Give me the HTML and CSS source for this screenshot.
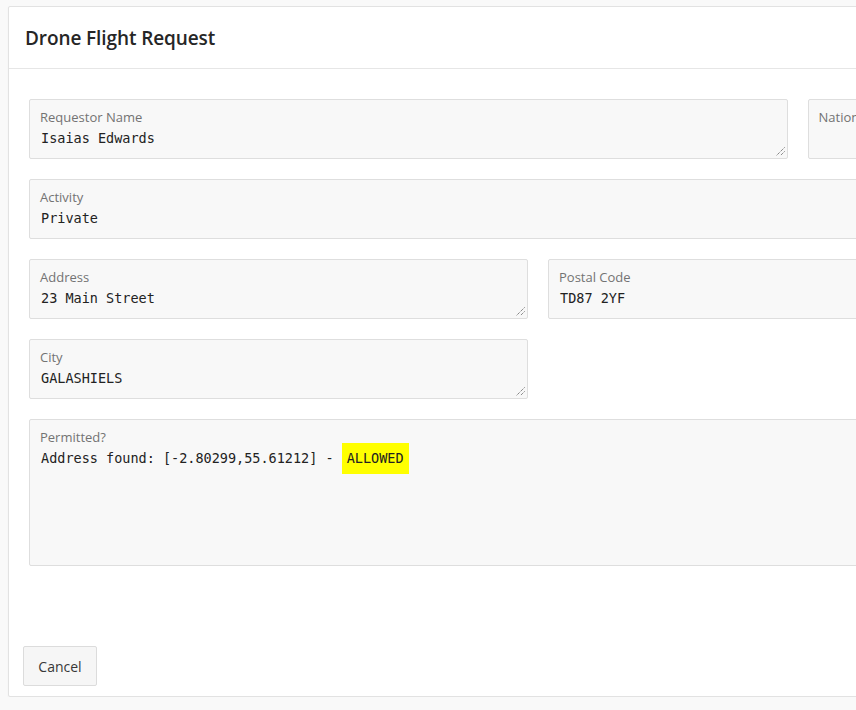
FILE: index.html
```html
<!DOCTYPE html>
<html lang="en">
<head>
<meta charset="utf-8">
<title>Drone Flight Request</title>
<link rel="stylesheet" href="styles.css">
</head>
<body>
<div class="page">
  <div class="card">
    <div class="card-header">
      <h1 class="title">Drone Flight Request</h1>
    </div>
    <div class="card-body">
      <div class="grid">
        <div class="field span9 resizable">
          <div class="label">Requestor Name</div>
          <div class="value">Isaias Edwards</div>
          <svg class="grip" width="9" height="9" viewBox="0 0 9 9"><path d="M8.5 0.5 L0.5 8.5 M8.5 4.5 L4.5 8.5" stroke="#555" stroke-width="1" stroke-dasharray="1 1" fill="none"/></svg>
        </div>
        <div class="field span3">
          <div class="label">Nationality</div>
          <div class="value"></div>
        </div>
        <div class="field span12">
          <div class="label">Activity</div>
          <div class="value">Private</div>
        </div>
        <div class="field span6 resizable">
          <div class="label">Address</div>
          <div class="value">23 Main Street</div>
          <svg class="grip" width="9" height="9" viewBox="0 0 9 9"><path d="M8.5 0.5 L0.5 8.5 M8.5 4.5 L4.5 8.5" stroke="#555" stroke-width="1" stroke-dasharray="1 1" fill="none"/></svg>
        </div>
        <div class="field span6">
          <div class="label">Postal Code</div>
          <div class="value">TD87 2YF</div>
        </div>
        <div class="field span6 resizable">
          <div class="label">City</div>
          <div class="value">GALASHIELS</div>
          <svg class="grip" width="9" height="9" viewBox="0 0 9 9"><path d="M8.5 0.5 L0.5 8.5 M8.5 4.5 L4.5 8.5" stroke="#555" stroke-width="1" stroke-dasharray="1 1" fill="none"/></svg>
        </div>
        <div class="span6"></div>
        <div class="field span12 tall">
          <div class="label">Permitted?</div>
          <div class="value">Address found: [-2.80299,55.61212] - <span class="hl">ALLOWED</span></div>
        </div>
      </div>
    </div>
    <div class="card-footer">
      <button class="btn" type="button">Cancel</button>
    </div>
  </div>
</div>
</body>
</html>
```
FILE: styles.css
```css
html, body {
  margin: 0;
  padding: 0;
  background: #f9f9f9;
  overflow: hidden;
}
.page {
  padding: 6px 0 0 8px;
  width: 1200px;
  font-family: "Open Sans", "Noto Sans", sans-serif;
  color: #262626;
}
.card {
  width: 1058px;
  background: #fff;
  border: 1px solid #e2e2e2;
  border-radius: 2px;
  box-shadow: 0 1px 2px rgba(0,0,0,0.04);
}
.card-header {
  height: 61px;
  border-bottom: 1px solid #e6e6e6;
  display: flex;
  align-items: center;
  padding: 0 16px;
}
.title {
  margin: 0;
  font-size: 19px;
  font-weight: 600;
  color: #262626;
  letter-spacing: -0.1px;
}
.card-body {
  padding: 30px 20px 70px 20px;
}
.grid {
  display: grid;
  grid-template-columns: repeat(12, 1fr);
  column-gap: 20px;
  row-gap: 20px;
  width: 1018px;
}
.span3 { grid-column: span 3; }
.span6 { grid-column: span 6; }
.span9 { grid-column: span 9; }
.span12 { grid-column: span 12; }
.field {
  position: relative;
  box-sizing: border-box;
  height: 60px;
  background: #f8f8f8;
  border: 1px solid #dedede;
  border-radius: 2px;
  padding: 8px 10px 0 10px;
}
.field.tall {
  height: 147px;
}
.label {
  font-size: 13px;
  line-height: 18px;
  color: #737373;
  white-space: nowrap;
}
.value {
  margin-top: 2px;
  font-family: "DejaVu Sans Mono", "Liberation Mono", monospace;
  font-size: 13.5px;
  line-height: 20px;
  color: #222;
  padding-left: 1px;
  white-space: pre;
}
.hl {
  background: #ffff00;
  padding: 7px 5px 8px 5px;
}
.grip {
  position: absolute;
  right: 2px;
  bottom: 2px;
}
.card-footer {
  padding: 10px 14px 10px 14px;
}
.btn {
  font-family: "Open Sans", "Noto Sans", sans-serif;
  font-size: 14px;
  color: #383838;
  background: #f6f6f6;
  border: 1px solid #dcdcdc;
  border-radius: 2px;
  height: 40px;
  width: 74px;
  padding: 0;
  cursor: pointer;
}
```
